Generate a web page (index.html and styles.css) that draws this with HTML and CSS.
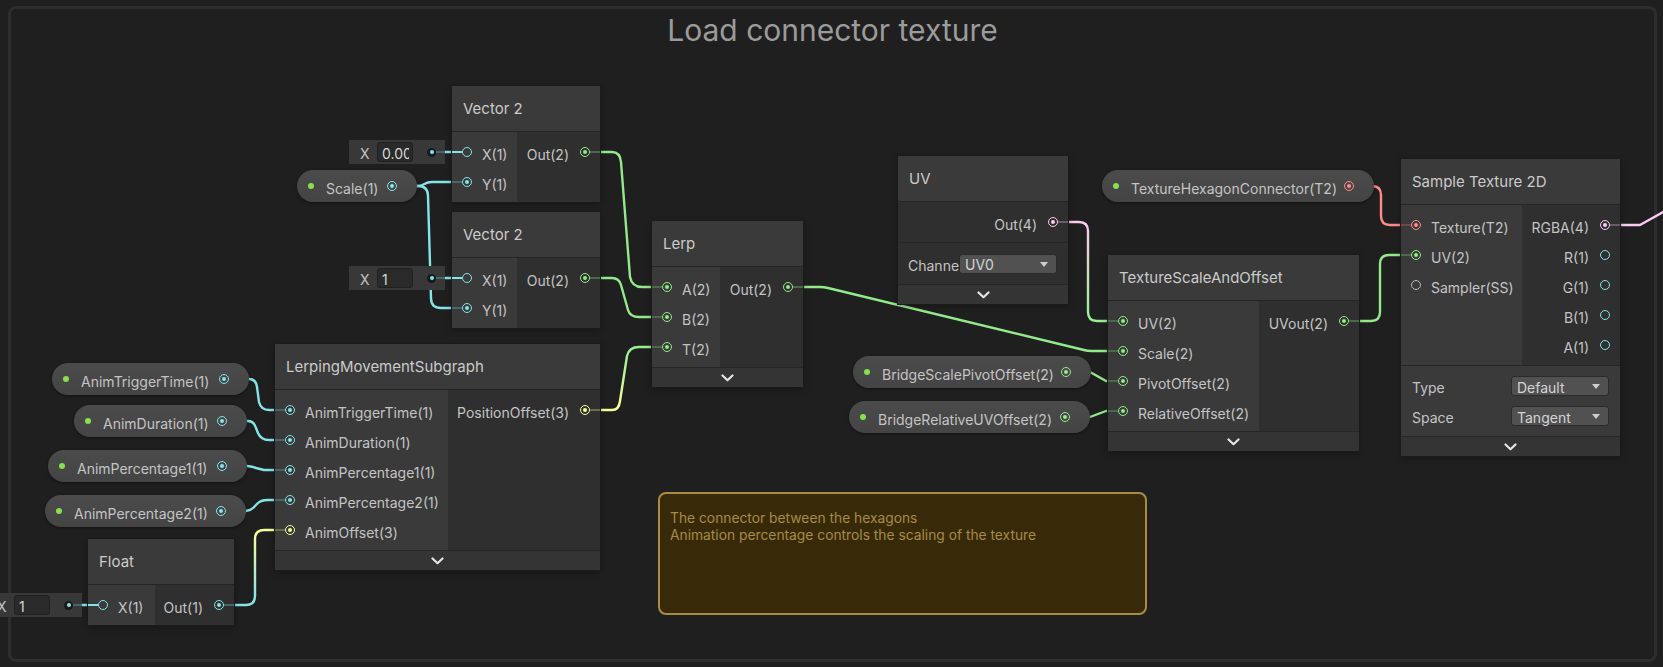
FILE: index.html
```html
<!DOCTYPE html>
<html>
<head>
<meta charset="utf-8">
<title>Load connector texture</title>
<link rel="stylesheet" href="styles.css">
</head>
<body>
<div class="canvas">
  <div class="group">
    <div class="group-title">Load connector texture</div>
  </div>

  <svg class="wires" width="1663" height="667" viewBox="0 0 1663 667">
    <defs>
      <linearGradient id="g-ye-gr" gradientUnits="userSpaceOnUse" x1="620" y1="405" x2="628" y2="352">
        <stop offset="0" stop-color="#f6ff9a"/>
        <stop offset="1" stop-color="#9aef92"/>
      </linearGradient>
      <linearGradient id="g-pk-gr" gradientUnits="userSpaceOnUse" x1="1088" y1="225" x2="1088" y2="318">
        <stop offset="0" stop-color="#fbcbf4"/>
        <stop offset="1" stop-color="#9aef92"/>
      </linearGradient>
      <linearGradient id="g-cy-ye" gradientUnits="userSpaceOnUse" x1="255" y1="602" x2="255" y2="533">
        <stop offset="0" stop-color="#84e4e7"/>
        <stop offset="1" stop-color="#f6ff9a"/>
      </linearGradient>
    </defs>
    <g class="w-cy">
      <path d="M392 186 H418 C424 186 424 182 432 182 H467"/>
      <path d="M392 186 H418 Q428 186 428 196 L431 298 Q431 308 441 308 H467"/>
      <path d="M432 152 H467"/>
      <path d="M432 278 H467"/>
      <path d="M224 379 H249 Q256 379 257 387 L259 402 Q261 410 269 410 H290"/>
      <path d="M222 421 H248 Q254 421 256 428 L258 433 Q261 440 269 440 H290"/>
      <path d="M222 466 H247 Q250 466 256 468 L264 470 H290"/>
      <path d="M221 511 H246 Q252 510 255 506 L258 503 Q261 500 268 500 H290"/>
      <path d="M69 605 H103"/>
    </g>
    <g class="w-gr">
      <path d="M585 152 H612 Q620 152 621 162 L630 277 Q632 287 642 287 H667"/>
      <path d="M585 278 H612 Q619 278 621 285 L628 310 Q630 317 639 317 H667"/>
      <path d="M788 287 H820 Q824 287 828 288 L1084 350 Q1087 351 1092 351 H1123"/>
      <path d="M1066 372 H1090 L1106 381 H1123"/>
      <path d="M1065 417 H1090 L1106 411 H1123"/>
      <path d="M1344 321 H1371 Q1380 321 1380 312 V264 Q1380 255 1389 255 H1416"/>
    </g>
    <path class="w" stroke="url(#g-ye-gr)" d="M585 410 H612 Q619 410 620 401 L627 356 Q629 347 639 347 H667"/>
    <path class="w" stroke="url(#g-pk-gr)" d="M1053 222 H1079 Q1088 222 1088 231 V312 Q1088 321 1097 321 H1123"/>
    <path class="w" stroke="url(#g-cy-ye)" d="M219 605 H246 Q255 605 255 596 V539 Q255 530 264 530 H290"/>
    <path class="w w-rd" d="M1349 186 H1372 Q1381 186 1381 195 V216 Q1381 225 1390 225 H1416"/>
    <path class="w w-pk" d="M1605 225 H1640 L1665 211"/>
  </svg>

  <div class="layer">
    <!-- inline value fields -->
    <div class="field f-a"><span class="fx">X</span><span class="fin"><span>0.00</span></span><i class="fdot"></i></div>
    <div class="field f-b"><span class="fx">X</span><span class="fin"><span>1</span></span><i class="fdot"></i></div>
    <div class="field f-f"><span class="fx">X</span><span class="fin"><span>1</span></span><i class="fdot"></i></div>

    <!-- properties -->
    <div class="pill p-scale c-cy"><i class="pdot"></i><span class="plabel">Scale(1)</span><i class="port on"></i></div>
    <div class="pill p-att c-cy"><i class="pdot"></i><span class="plabel">AnimTriggerTime(1)</span><i class="port on"></i></div>
    <div class="pill p-dur c-cy"><i class="pdot"></i><span class="plabel">AnimDuration(1)</span><i class="port on"></i></div>
    <div class="pill p-p1 c-cy"><i class="pdot"></i><span class="plabel">AnimPercentage1(1)</span><i class="port on"></i></div>
    <div class="pill p-p2 c-cy"><i class="pdot"></i><span class="plabel">AnimPercentage2(1)</span><i class="port on"></i></div>
    <div class="pill p-thc c-rd"><i class="pdot"></i><span class="plabel">TextureHexagonConnector(T2)</span><i class="port on"></i></div>
    <div class="pill p-bspo c-gr"><i class="pdot"></i><span class="plabel">BridgeScalePivotOffset(2)</span><i class="port on"></i></div>
    <div class="pill p-bruv c-gr"><i class="pdot"></i><span class="plabel">BridgeRelativeUVOffset(2)</span><i class="port on"></i></div>

    <!-- Vector 2 (top) -->
    <div class="node n-v2a">
      <div class="node-header">Vector 2</div>
      <div class="node-body">
        <div class="col-in w-v2">
          <div class="row c-cy link solid"><i class="port"></i><span>X(1)</span></div>
          <div class="row c-cy link"><i class="port on"></i><span>Y(1)</span></div>
        </div>
        <div class="col-out">
          <div class="row c-gr link"><span>Out(2)</span><i class="port on"></i></div>
        </div>
      </div>
    </div>

    <!-- Vector 2 (bottom) -->
    <div class="node n-v2b">
      <div class="node-header">Vector 2</div>
      <div class="node-body">
        <div class="col-in w-v2">
          <div class="row c-cy link solid"><i class="port"></i><span>X(1)</span></div>
          <div class="row c-cy link"><i class="port on"></i><span>Y(1)</span></div>
        </div>
        <div class="col-out">
          <div class="row c-gr link"><span>Out(2)</span><i class="port on"></i></div>
        </div>
      </div>
    </div>

    <!-- Lerp -->
    <div class="node n-lerp">
      <div class="node-header">Lerp</div>
      <div class="node-body">
        <div class="col-in w-lerp">
          <div class="row c-gr link"><i class="port on"></i><span>A(2)</span></div>
          <div class="row c-gr link"><i class="port on"></i><span>B(2)</span></div>
          <div class="row c-gr link"><i class="port on"></i><span>T(2)</span></div>
        </div>
        <div class="col-out">
          <div class="row c-gr link"><span>Out(2)</span><i class="port on"></i></div>
        </div>
      </div>
      <div class="collapse"><svg class="chev" width="13" height="8" viewBox="0 0 13 8"><path d="M1.5 1.5 L6.5 6.2 L11.5 1.5"/></svg></div>
    </div>

    <!-- LerpingMovementSubgraph -->
    <div class="node n-lms">
      <div class="node-header">LerpingMovementSubgraph</div>
      <div class="node-body">
        <div class="col-in w-lms">
          <div class="row c-cy link"><i class="port on"></i><span>AnimTriggerTime(1)</span></div>
          <div class="row c-cy link"><i class="port on"></i><span>AnimDuration(1)</span></div>
          <div class="row c-cy link"><i class="port on"></i><span>AnimPercentage1(1)</span></div>
          <div class="row c-cy link"><i class="port on"></i><span>AnimPercentage2(1)</span></div>
          <div class="row c-ye link"><i class="port on"></i><span>AnimOffset(3)</span></div>
        </div>
        <div class="col-out">
          <div class="row c-ye link"><span>PositionOffset(3)</span><i class="port on"></i></div>
        </div>
      </div>
      <div class="collapse"><svg class="chev" width="13" height="8" viewBox="0 0 13 8"><path d="M1.5 1.5 L6.5 6.2 L11.5 1.5"/></svg></div>
    </div>

    <!-- Float -->
    <div class="node n-float">
      <div class="node-header">Float</div>
      <div class="node-body">
        <div class="col-in w-float">
          <div class="row c-cy link solid"><i class="port"></i><span>X(1)</span></div>
        </div>
        <div class="col-out">
          <div class="row c-cy link"><span>Out(1)</span><i class="port on"></i></div>
        </div>
      </div>
    </div>

    <!-- UV -->
    <div class="node n-uv">
      <div class="node-header">UV</div>
      <div class="node-body">
        <div class="col-out">
          <div class="row c-pk link"><span>Out(4)</span><i class="port on"></i></div>
        </div>
      </div>
      <div class="uv-settings">
        <span class="set-label uv-label">Channel</span>
        <span class="dd dd-uv">UV0</span>
      </div>
      <div class="collapse"><svg class="chev" width="13" height="8" viewBox="0 0 13 8"><path d="M1.5 1.5 L6.5 6.2 L11.5 1.5"/></svg></div>
    </div>

    <!-- TextureScaleAndOffset -->
    <div class="node n-tso">
      <div class="node-header">TextureScaleAndOffset</div>
      <div class="node-body">
        <div class="col-in w-tso">
          <div class="row c-gr link"><i class="port on"></i><span>UV(2)</span></div>
          <div class="row c-gr link"><i class="port on"></i><span>Scale(2)</span></div>
          <div class="row c-gr link"><i class="port on"></i><span>PivotOffset(2)</span></div>
          <div class="row c-gr link"><i class="port on"></i><span>RelativeOffset(2)</span></div>
        </div>
        <div class="col-out">
          <div class="row c-gr link"><span>UVout(2)</span><i class="port on"></i></div>
        </div>
      </div>
      <div class="collapse"><svg class="chev" width="13" height="8" viewBox="0 0 13 8"><path d="M1.5 1.5 L6.5 6.2 L11.5 1.5"/></svg></div>
    </div>

    <!-- Sample Texture 2D -->
    <div class="node n-st">
      <div class="node-header">Sample Texture 2D</div>
      <div class="node-body">
        <div class="col-in w-st">
          <div class="row c-rd link"><i class="port on"></i><span>Texture(T2)</span></div>
          <div class="row c-gr link"><i class="port on"></i><span>UV(2)</span></div>
          <div class="row c-gy"><i class="port"></i><span>Sampler(SS)</span></div>
        </div>
        <div class="col-out">
          <div class="row c-pk link"><span>RGBA(4)</span><i class="port on"></i></div>
          <div class="row c-cy"><span>R(1)</span><i class="port"></i></div>
          <div class="row c-cy"><span>G(1)</span><i class="port"></i></div>
          <div class="row c-cy"><span>B(1)</span><i class="port"></i></div>
          <div class="row c-cy"><span>A(1)</span><i class="port"></i></div>
        </div>
      </div>
      <div class="st-settings">
        <div class="set-row"><span class="set-label st-label">Type</span><span class="dd dd-st">Default</span></div>
        <div class="set-row"><span class="set-label st-label">Space</span><span class="dd dd-st">Tangent</span></div>
      </div>
      <div class="collapse"><svg class="chev" width="13" height="8" viewBox="0 0 13 8"><path d="M1.5 1.5 L6.5 6.2 L11.5 1.5"/></svg></div>
    </div>

    <!-- Sticky note -->
    <div class="sticky">
      <p>The connector between the hexagons<br>Animation percentage controls the scaling of the texture</p>
    </div>
  </div>
</div>
</body>
</html>
```

FILE: styles.css
```css
* { box-sizing: border-box; }

html, body {
  margin: 0;
  padding: 0;
  background: #1f1f1f;
}

body {
  width: 1663px;
  height: 667px;
  overflow: hidden;
  font-family: Inter, "Noto Sans", "DejaVu Sans", sans-serif;
  color: #c4c4c4;
}

.canvas {
  position: relative;
  width: 1663px;
  height: 667px;
  padding: 6px 0 0 8px;
}

/* ---------- group frame ---------- */
.group {
  width: 1649px;
  height: 656px;
  border: 3px solid #2d2d2d;
  border-radius: 8px;
  background: #1f1f1f;
}

.group-title {
  padding-top: 3px;
  text-align: center;
  font-size: 30px;
  line-height: 36px;
  color: #9b9b9b;
}

/* ---------- wires ---------- */
.wires {
  position: absolute;
  left: 0;
  top: 0;
}

.wires path {
  fill: none;
  stroke-width: 2.4;
  stroke-linecap: round;
  stroke-linejoin: round;
}

.w-cy path { stroke: #84e4e7; }
.w-gr path { stroke: #93ea8a; }
.w-rd { stroke: #ff8b8b; }
.w-pk { stroke: #fbcbf4; }

.layer {
  position: absolute;
  inset: 0;
}

/* ---------- colours ---------- */
.c-cy { --c: #84e4e7; --s: #46676a; }
.c-gr { --c: #93ea8a; --s: #4b6a48; }
.c-ye { --c: #f6ff9a; --s: #6b6d47; }
.c-pk { --c: #fbcbf4; --s: #6c5a69; }
.c-rd { --c: #ff8b8b; --s: #6e4747; }
.c-gy { --c: #bdbdbd; --s: #555; }

/* ---------- ports ---------- */
.port {
  display: block;
  flex: none;
  position: relative;
  width: 10px;
  height: 10px;
  border: 1.6px solid var(--c);
  border-radius: 50%;
}

.port.on::after {
  content: "";
  position: absolute;
  left: 50%;
  top: 50%;
  width: 4px;
  height: 4px;
  margin: -2px 0 0 -2px;
  border-radius: 50%;
  background: var(--c);
}

/* ---------- nodes ---------- */
.node {
  position: absolute;
  background: #2f2f2f;
  box-shadow: 0 0 0 1px #1b1b1b, 0 2px 6px rgba(0, 0, 0, 0.35);
}

.node-header {
  height: 46px;
  padding-left: 11px;
  display: flex;
  align-items: center;
  background: #3a3a3a;
  border-bottom: 1px solid #252525;
  font-size: 15px;
  color: #cbcbcb;
  white-space: nowrap;
}

.node-body {
  display: flex;
}

.col-in {
  flex: none;
  padding: 5px 0;
  background: #3a3a3a;
}

.col-out {
  flex: 1;
  padding: 5px 0;
}

.row {
  position: relative;
  height: 30px;
  display: flex;
  align-items: center;
  font-size: 14px;
  color: #c4c4c4;
  white-space: nowrap;
}

.row span {
  padding-top: 4px;
}

.col-in .row {
  padding-left: 10px;
  gap: 10px;
}

.col-out .row {
  justify-content: flex-end;
  padding-right: 10px;
  gap: 11px;
}

.row.link::before {
  content: "";
  position: absolute;
  top: 14px;
  width: 10px;
  height: 2px;
  background: var(--s);
}

.col-in .row.link::before { left: 0; }
.col-out .row.link::before { right: 0; }
.row.solid::before { background: var(--c); }

.collapse {
  height: 20px;
  display: flex;
  align-items: center;
  justify-content: center;
  background: #343434;
  border-top: 1px solid #262626;
}

.chev path {
  fill: none;
  stroke: #e6e6e6;
  stroke-width: 2.2;
  stroke-linecap: round;
  stroke-linejoin: round;
}

/* node placement on the graph canvas */
.n-v2a   { left: 452px;  top: 86px;  width: 148px; }
.n-v2b   { left: 452px;  top: 212px; width: 148px; }
.n-lerp  { left: 652px;  top: 221px; width: 151px; }
.n-lms   { left: 275px;  top: 344px; width: 325px; }
.n-float { left: 88px;   top: 539px; width: 146px; }
.n-uv    { left: 898px;  top: 156px; width: 170px; }
.n-tso   { left: 1108px; top: 255px; width: 251px; }
.n-st    { left: 1401px; top: 159px; width: 219px; }

.w-v2    { width: 65px; }
.w-lerp  { width: 68px; }
.w-lms   { width: 173px; }
.w-float { width: 67px; }
.w-tso   { width: 151px; }
.w-st    { width: 121px; }

/* ---------- node settings ---------- */
.uv-settings {
  height: 42px;
  padding-left: 10px;
  display: flex;
  align-items: center;
  border-top: 1px solid #262626;
}

.st-settings {
  padding: 5px 0;
  background: #3a3a3a;
  border-top: 1px solid #262626;
}

.set-row {
  height: 30px;
  padding-left: 11px;
  display: flex;
  align-items: center;
}

.set-label {
  flex: none;
  padding-top: 3px;
  font-size: 14px;
  color: #c4c4c4;
  white-space: nowrap;
  overflow: hidden;
}

.uv-label { width: 51px; }
.st-label { width: 99px; }

.dd {
  position: relative;
  flex: none;
  width: 98px;
  height: 20px;
  padding: 2px 0 0 5px;
  display: flex;
  align-items: center;
  background: #515151;
  border: 1px solid #2b2b2b;
  border-radius: 3px;
  font-size: 14px;
  color: #d4d4d4;
}

.dd::after {
  content: "";
  position: absolute;
  right: 8px;
  top: 7px;
  border-left: 4.5px solid transparent;
  border-right: 4.5px solid transparent;
  border-top: 5px solid #cfcfcf;
}

/* ---------- property pills ---------- */
.pill {
  position: absolute;
  height: 32px;
  padding: 0 20px 0 11px;
  display: flex;
  align-items: center;
  border-radius: 16px;
  background: linear-gradient(#4b4b4b, #444444);
  box-shadow: 0 1px 3px rgba(0, 0, 0, 0.45);
  font-size: 14px;
  color: #c4c4c4;
  white-space: nowrap;
}

.pdot {
  flex: none;
  width: 6px;
  height: 6px;
  border-radius: 50%;
  background: #86e050;
}

.plabel {
  margin-left: 12px;
  padding-top: 4px;
}

.pill .port {
  margin-left: auto;
}

.p-scale { left: 297px;  top: 170px; width: 120px; }
.p-att   { left: 52px;   top: 363px; width: 197px; }
.p-dur   { left: 74px;   top: 405px; width: 173px; }
.p-p1    { left: 48px;   top: 450px; width: 199px; }
.p-p2    { left: 45px;   top: 495px; width: 201px; }
.p-thc   { left: 1102px; top: 170px; width: 272px; }
.p-bspo  { left: 853px;  top: 356px; width: 238px; }
.p-bruv  { left: 849px;  top: 401px; width: 241px; }

/* ---------- inline value fields ---------- */
.field {
  position: absolute;
  width: 96px;
  height: 24px;
  padding-left: 11px;
  display: flex;
  align-items: center;
  background: #383838;
  font-size: 14px;
  color: #c4c4c4;
}

.field::after {
  content: "";
  position: absolute;
  left: 87px;
  top: 11px;
  width: 9px;
  height: 2px;
  background: #46676a;
}

.fx {
  width: 17px;
  flex: none;
  padding-top: 2px;
}

.fin {
  flex: none;
  width: 36px;
  height: 20px;
  padding: 2px 0 0 4px;
  display: flex;
  align-items: center;
  background: #2a2a2a;
  border: 1px solid #202020;
  border-radius: 3px;
  color: #d6d6d6;
}

.fin span {
  display: block;
  width: 27px;
  overflow: hidden;
  white-space: nowrap;
}

.fdot {
  position: relative;
  flex: none;
  margin-left: auto;
  margin-right: 9px;
  width: 9px;
  height: 9px;
  border-radius: 50%;
  background: #1c1c1c;
  border: 1px solid #151515;
}

.fdot::after {
  content: "";
  position: absolute;
  left: 50%;
  top: 50%;
  width: 4px;
  height: 4px;
  margin: -2px 0 0 -2px;
  border-radius: 50%;
  background: #84e4e7;
}

.f-a { left: 349px; top: 140px; }
.f-b { left: 349px; top: 266px; }
.f-f { left: -14px; top: 593px; }

/* ---------- sticky note ---------- */
.sticky {
  position: absolute;
  left: 658px;
  top: 492px;
  width: 489px;
  height: 123px;
  padding: 16px 10px 0 10px;
  background: #382a08;
  border: 2.5px solid #a88c42;
  border-radius: 8px;
}

.sticky p {
  margin: 0;
  font-size: 13.8px;
  line-height: 17px;
  color: #a68a45;
}
```
